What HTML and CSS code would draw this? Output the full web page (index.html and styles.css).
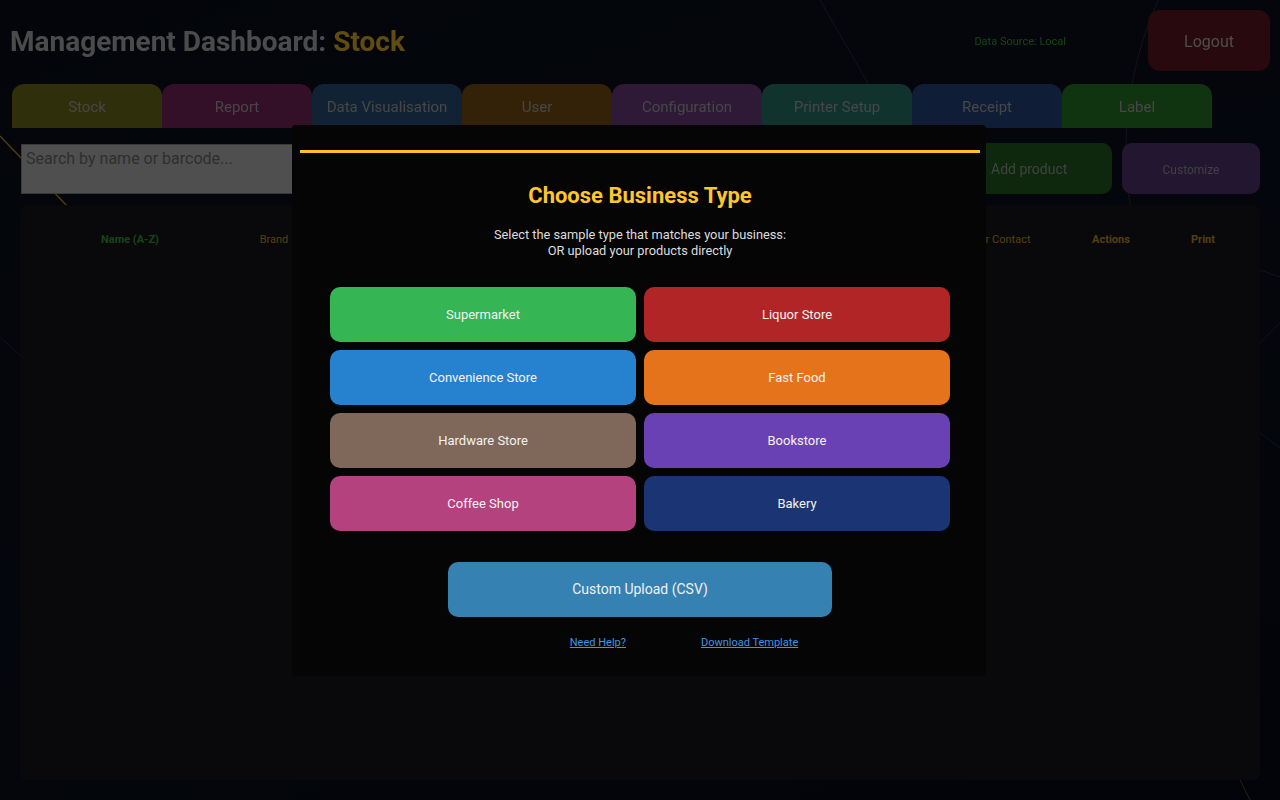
FILE: index.html
```html
<!DOCTYPE html>
<html lang="en">
<head>
    <meta charset="UTF-8">
    <meta name="viewport" content="width=device-width, initial-scale=1.0">
    <title>Management Dashboard - Stock</title>
    <link rel="stylesheet" href="styles.css">
</head>
<body>
    <svg class="backdrop" viewBox="0 0 1280 800" preserveAspectRatio="none" aria-hidden="true">
        <line x1="0" y1="136" x2="70" y2="209" stroke="#c9a227" stroke-width="1.5"/>
        <line x1="820" y1="0" x2="915" y2="165" stroke="#2c3447" stroke-width="1"/>
        <line x1="0" y1="337" x2="22" y2="357" stroke="#2c3447" stroke-width="1"/>
        <line x1="1260" y1="270" x2="1280" y2="277" stroke="#2c3447" stroke-width="1"/>
        <line x1="1260" y1="343" x2="1280" y2="323" stroke="#2c3447" stroke-width="1"/>
        <line x1="1240" y1="780" x2="1250" y2="800" stroke="#6b5a22" stroke-width="1"/>
        <circle cx="1491" cy="150" r="365" fill="none" stroke="#2c3447" stroke-width="1"/>
    </svg>

    <header class="header">
        <h1 class="title">Management Dashboard: <span class="title-accent">Stock</span></h1>
        <div class="header-right">
            <span class="data-source">Data Source: Local</span>
            <button class="logout-btn">Logout</button>
        </div>
    </header>

    <nav class="tabs">
        <button class="tab tab-stock">Stock</button>
        <button class="tab tab-report">Report</button>
        <button class="tab tab-dataviz">Data Visualisation</button>
        <button class="tab tab-user">User</button>
        <button class="tab tab-config">Configuration</button>
        <button class="tab tab-printer">Printer Setup</button>
        <button class="tab tab-receipt">Receipt</button>
        <button class="tab tab-label">Label</button>
    </nav>

    <div class="toolbar">
        <input class="search" type="text" placeholder="Search by name or barcode...">
        <button class="add-btn">Add product</button>
        <button class="customize-btn">Customize</button>
    </div>

    <section class="stock-table">
        <div class="table-head">
            <span class="col-green">Name (A-Z)</span>
            <span class="col-plain">Brand</span>
            <span></span>
            <span></span>
            <span></span>
            <span></span>
            <span class="col-plain">Supplier Contact</span>
            <span class="col-bold">Actions</span>
            <span class="col-bold">Print</span>
        </div>
    </section>

    <div class="overlay">
        <div class="modal">
            <div class="modal-rule"></div>
            <h2 class="modal-title">Choose Business Type</h2>
            <p class="modal-text">
                Select the sample type that matches your business:<br>
                OR upload your products directly
            </p>

            <div class="type-grid">
                <button class="type-btn type-supermarket">Supermarket</button>
                <button class="type-btn type-liquor">Liquor Store</button>
                <button class="type-btn type-convenience">Convenience Store</button>
                <button class="type-btn type-fastfood">Fast Food</button>
                <button class="type-btn type-hardware">Hardware Store</button>
                <button class="type-btn type-bookstore">Bookstore</button>
                <button class="type-btn type-coffee">Coffee Shop</button>
                <button class="type-btn type-bakery">Bakery</button>
            </div>

            <button class="upload-btn">Custom Upload (CSV)</button>

            <div class="modal-links">
                <a href="#">Need Help?</a>
                <a href="#">Download Template</a>
            </div>
        </div>
    </div>
</body>
</html>
```

FILE: styles.css
```css
* {
    margin: 0;
    padding: 0;
    box-sizing: border-box;
}

body {
    font-family: Roboto, 'Liberation Sans', sans-serif;
    background: linear-gradient(160deg, #0a0f1c 0%, #0c1222 50%, #080c18 100%);
    color: #ddd;
    height: 800px;
    overflow: hidden;
}

button {
    font-family: inherit;
    border: none;
    cursor: pointer;
}

.backdrop {
    position: fixed;
    inset: 0;
    width: 100%;
    height: 100%;
    z-index: 0;
}

.header,
.tabs,
.toolbar,
.stock-table {
    position: relative;
    z-index: 1;
}

/* header */
.header {
    display: flex;
    align-items: center;
    justify-content: space-between;
    padding: 10px;
}

.title {
    font-size: 28px;
    font-weight: bold;
    color: #c4c4c4;
    padding-top: 1px;
}

.title-accent {
    color: #fdc72e;
}

.header-right {
    display: flex;
    align-items: center;
    gap: 82px;
}

.data-source {
    font-size: 11px;
    color: #3bb33b;
    padding-top: 2px;
}

.logout-btn {
    width: 122px;
    height: 61px;
    border-radius: 12px;
    background: #6a1822;
    color: #c8c8c8;
    font-size: 16px;
    padding-top: 2px;
}

/* tabs */
.tabs {
    display: flex;
    margin: 3px 0 0 12px;
}

.tab {
    width: 150px;
    height: 44px;
    border-radius: 12px 12px 0 0;
    color: #b8b8b8;
    font-size: 15px;
    padding-top: 2px;
}

.tab-stock { background: #7c7c20; }
.tab-report { background: #862a66; }
.tab-dataviz { background: #2a5a86; }
.tab-user { background: #875a16; }
.tab-config { background: #7a4490; }
.tab-printer { background: #2c867a; }
.tab-receipt { background: #2c4e90; }
.tab-label { background: #2c862c; }

/* toolbar */
.toolbar {
    display: flex;
    align-items: center;
    gap: 10px;
    margin-top: 15px;
    padding: 0 20px 0 21px;
}

.search {
    flex: 1;
    height: 50px;
    padding: 0 4px 20px;
    border: 1px solid #999;
    background: #d0d0d0;
    font-family: inherit;
    font-size: 16px;
    color: #333;
}

.search::placeholder {
    color: #7a7a7a;
}

.add-btn {
    width: 138px;
    height: 51px;
    border-radius: 10px;
    background: #226a22;
    color: #aaa;
    font-size: 14px;
    text-align: left;
    padding-left: 17px;
}

.customize-btn {
    width: 138px;
    height: 51px;
    border-radius: 10px;
    background: #5c3a7e;
    color: #a8a8a8;
    font-size: 12px;
    padding-top: 2px;
}

/* table */
.stock-table {
    margin: 11px 20px 0;
    height: 575px;
    border-radius: 8px;
    background: #1a1a1d;
    padding: 28px 12px 0 0;
}

.table-head {
    display: grid;
    grid-template-columns: 220px 68px 152px 152px 152px 152px 148px 94px 90px;
    font-size: 11px;
    text-align: center;
}

.col-green {
    color: #3cb23c;
    font-weight: bold;
}

.col-plain {
    color: #d9a52a;
}

.col-bold {
    color: #d9a52a;
    font-weight: bold;
}

/* modal */
.overlay {
    position: fixed;
    inset: 0;
    z-index: 10;
    background: rgba(0, 0, 0, 0.62);
    display: flex;
    align-items: center;
    justify-content: center;
}

.modal {
    width: 694px;
    height: 551px;
    margin-left: -2px;
    background: #050505;
    border-radius: 4px;
    padding: 25px 6px 0 8px;
    display: flex;
    flex-direction: column;
    align-items: center;
}

.modal-rule {
    align-self: stretch;
    height: 3px;
    background: #fbc21c;
}

.modal-title {
    margin-top: 30px;
    font-size: 22px;
    line-height: 26px;
    color: #fdc62c;
}

.modal-text {
    margin-top: 18px;
    font-size: 12.8px;
    line-height: 16px;
    text-align: center;
    color: #dcdcdc;
}

.type-grid {
    margin-top: 28px;
    display: grid;
    grid-template-columns: 306px 306px;
    gap: 8px;
}

.type-btn {
    height: 55px;
    border-radius: 10px;
    color: #f2f2f2;
    font-size: 13px;
}

.type-supermarket { background: #35b553; }
.type-liquor { background: #b22527; }
.type-convenience { background: #2682cf; }
.type-fastfood { background: #e5731b; }
.type-hardware { background: #7f685a; }
.type-bookstore { background: #6a41b4; }
.type-coffee { background: #b3427e; }
.type-bakery { background: #1b3574; }

.upload-btn {
    margin-top: 31px;
    width: 384px;
    height: 55px;
    border-radius: 10px;
    background: #3581b2;
    color: #f0f0f0;
    font-size: 14px;
}

.modal-links {
    margin-top: 19px;
    display: flex;
    gap: 75px;
    padding-left: 88px;
    font-size: 11px;
    line-height: 14px;
}

.modal-links a {
    color: #3d95e8;
}
```
